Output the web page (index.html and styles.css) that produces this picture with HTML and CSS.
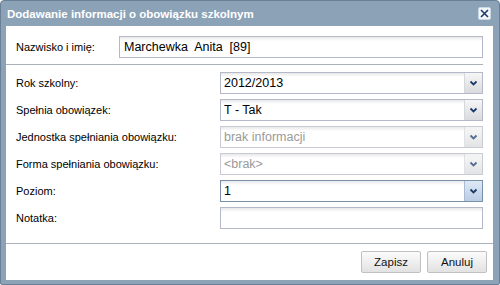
FILE: index.html
```html
<!DOCTYPE html>
<html lang="pl">
<head>
    <meta charset="UTF-8">
    <title>Dodawanie informacji o obowiązku szkolnym</title>
    <link rel="stylesheet" href="styles.css">
</head>
<body>
    <div class="window">
        <div class="header">
            <span class="title">Dodawanie informacji o obowiązku szkolnym</span>
            <button class="close" title="Zamknij">
                <svg width="11" height="11" viewBox="0 0 11 11"><path d="M2 2 L9 9 M9 2 L2 9" stroke="#1d3a6b" stroke-width="1.6" fill="none"/></svg>
            </button>
        </div>
        <div class="body">
            <div class="form">
                <div class="name-row">
                    <label>Nazwisko i imię:</label>
                    <div class="field">Marchewka  Anita  [89]</div>
                </div>
                <div class="sep"></div>
                <div class="rows">
                    <label>Rok szkolny:</label>
                    <div class="field combo"><span class="value">2012/2013</span><span class="trigger"><svg width="9" height="6" viewBox="0 0 9 6"><path d="M1.5 1.5 L4.5 4.5 L7.5 1.5" stroke="#1d3a6b" stroke-width="1.8" fill="none"/></svg></span></div>

                    <label>Spełnia obowiązek:</label>
                    <div class="field combo"><span class="value">T - Tak</span><span class="trigger"><svg width="9" height="6" viewBox="0 0 9 6"><path d="M1.5 1.5 L4.5 4.5 L7.5 1.5" stroke="#1d3a6b" stroke-width="1.8" fill="none"/></svg></span></div>

                    <label>Jednostka spełniania obowiązku:</label>
                    <div class="field combo disabled"><span class="value">brak informacji</span><span class="trigger"><svg width="9" height="6" viewBox="0 0 9 6"><path d="M1.5 1.5 L4.5 4.5 L7.5 1.5" stroke="#1d3a6b" stroke-width="1.8" fill="none"/></svg></span></div>

                    <label>Forma spełniania obowiązku:</label>
                    <div class="field combo disabled"><span class="value">&lt;brak&gt;</span><span class="trigger"><svg width="9" height="6" viewBox="0 0 9 6"><path d="M1.5 1.5 L4.5 4.5 L7.5 1.5" stroke="#1d3a6b" stroke-width="1.8" fill="none"/></svg></span></div>

                    <label>Poziom:</label>
                    <div class="field combo focus"><span class="value">1</span><span class="trigger"><svg width="9" height="6" viewBox="0 0 9 6"><path d="M1.5 1.5 L4.5 4.5 L7.5 1.5" stroke="#1d3a6b" stroke-width="1.8" fill="none"/></svg></span></div>

                    <label>Notatka:</label>
                    <div class="field"></div>
                </div>
            </div>
            <div class="footer">
                <button class="btn">Zapisz</button>
                <button class="btn">Anuluj</button>
            </div>
        </div>
    </div>
</body>
</html>
```

FILE: styles.css
```css
body {
    margin: 0;
    font-family: 'Liberation Sans', Arial, sans-serif;
    font-size: 11px;
    color: #000;
}

.window {
    width: 500px;
    height: 285px;
    box-sizing: border-box;
    display: flex;
    flex-direction: column;
    background-color: #8ca2b7;
    border: 1px solid #6a8097;
    border-radius: 4px 4px 2px 2px;
}

.header {
    height: 25px;
    display: flex;
    align-items: center;
    justify-content: space-between;
    padding: 0 8px 0 6px;
}

.title {
    color: #fff;
    font-weight: 700;
    font-size: 11.5px;
}

.close {
    width: 13px;
    height: 13px;
    padding: 0;
    border: 1px solid #c9d6e3;
    border-radius: 2px;
    background-color: #f2f6fa;
    display: flex;
    align-items: center;
    justify-content: center;
    margin-top: -1px;
}

.body {
    flex: 1;
    display: flex;
    flex-direction: column;
    background-color: #fff;
    margin: 0 6px 4px 5px;
}

.form {
    padding: 10px 10px 0 10px;
}

.name-row {
    display: grid;
    grid-template-columns: 103px 1fr;
    align-items: center;
}

.sep {
    height: 1px;
    background-color: #a9b1bb;
    margin: 6px 0 7px -10px;
}

.rows {
    display: grid;
    grid-template-columns: 204px 1fr;
    grid-auto-rows: 22px;
    row-gap: 5px;
    align-items: center;
}

.field {
    height: 22px;
    box-sizing: border-box;
    border: 1px solid #b5b8c8;
    background: linear-gradient(#e8e8e8, #fff 4px);
    font-size: 12.5px;
    line-height: 20px;
    padding-left: 4px;
    white-space: pre;
}

.combo {
    display: flex;
    padding-left: 0;
}

.combo .value {
    flex: 1;
    padding-left: 3px;
}

.trigger {
    width: 17px;
    border-left: 1px solid #d5d7dd;
    background: linear-gradient(#f6f6f6, #d9dadd);
    display: flex;
    align-items: center;
    justify-content: center;
}

.disabled {
    color: #9a9a9a;
    border-color: #c9cbd4;
}

.disabled .trigger {
    opacity: 0.75;
}

.focus {
    border-color: #7a8fa8;
}

.focus .trigger {
    background: linear-gradient(#dfe9f5, #b9cde5);
    border-left-color: #a9bdd6;
}

.footer {
    margin-top: auto;
    border-top: 1px solid #a9b1bb;
    display: flex;
    justify-content: flex-end;
    gap: 6px;
    padding: 7px 6px 7px 0;
}

.btn {
    width: 60px;
    height: 22px;
    font-family: 'Liberation Sans', Arial, sans-serif;
    font-size: 11.5px;
    border: 1px solid #c0c0c0;
    border-radius: 2px;
    background: linear-gradient(#fbfbfb, #e2e2e2);
    color: #111;
    padding: 0;
}
```
